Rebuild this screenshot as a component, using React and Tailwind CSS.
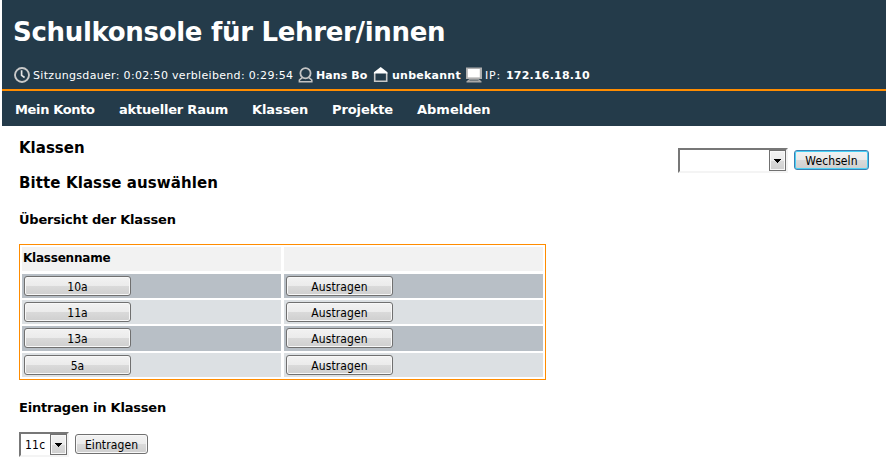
import React from "react";

const ROWS = [
  { name: "10a", row: "h-[24px] mb-[2px]", tone: "bg-[#b8bfc6]" },
  { name: "11a", row: "h-[24px] mb-[2px]", tone: "bg-[#dce0e3]" },
  { name: "13a", row: "h-[25px] mb-[2px]", tone: "bg-[#b8bfc6]" },
  { name: "5a", row: "h-[24px]", tone: "bg-[#dce0e3]" },
];

const NAV = [
  { label: "Mein Konto", width: "w-[104px] tracking-[-0.35px]" },
  { label: "aktueller Raum", width: "w-[133px] tracking-[-0.2px]" },
  { label: "Klassen", width: "w-[80px] tracking-[-0.1px]" },
  { label: "Projekte", width: "w-[85px] tracking-[-0.1px]" },
  { label: "Abmelden", width: "w-[90px]" },
];

function Button({ children, className, focused = false }) {
  const edge = focused
    ? "border-[#3c7fb1] shadow-[inset_0_0_0_1px_#48d0f5]"
    : "border-[#707070] shadow-[inset_0_0_0_1px_#f8f8f8]";
  return (
    <button
      className={`flex h-[20px] shrink-0 items-center justify-center whitespace-nowrap rounded-[3px] border bg-[linear-gradient(#f2f2f2_0%,#ebebeb_50%,#dadada_51%,#cfcfcf_100%)] pt-[2px] font-['DejaVu_Sans_Condensed','DejaVu_Sans',sans-serif] text-[12px] font-normal leading-[18px] tracking-[0.1px] text-black [font-stretch:condensed] ${edge} ${className}`}
    >
      {children}
    </button>
  );
}

function Select({ value, className }) {
  return (
    <div
      className={`flex h-[25px] shrink-0 border-2 border-b-[#f4f4f4] border-l-[#777] border-r-[#f4f4f4] border-t-[#777] bg-white ${className}`}
    >
      <span className="flex-1 pl-[4px] pt-px font-['DejaVu_Sans_Condensed','DejaVu_Sans',sans-serif] text-[12px] leading-[21px] tracking-[0.2px] [font-stretch:condensed]">
        {value}
      </span>
      <span className="flex h-[21px] w-[17px] items-center justify-center border border-[#707070] bg-[linear-gradient(#f2f2f2_0%,#ebebeb_50%,#dadada_51%,#cfcfcf_100%)] shadow-[inset_0_0_0_1px_#f8f8f8]">
        <svg width="7" height="4" viewBox="0 0 7 4" shapeRendering="crispEdges">
          <path d="M0 0h7v1H6v1H5v1H4v1H3V3H2V2H1V1H0z" />
        </svg>
      </span>
    </div>
  );
}

function ClockIcon() {
  return (
    <svg className="shrink-0" width="16" height="16" viewBox="0 0 16 16" fill="none">
      <circle cx="8" cy="8" r="7" stroke="#c9c9c9" strokeWidth="1.9" />
      <path d="M7.6 3.2v5.2l3 2.1" stroke="#e4e4e4" strokeWidth="1.7" />
    </svg>
  );
}

function UserIcon() {
  return (
    <svg className="shrink-0" width="16" height="16" viewBox="0 0 16 16" fill="none" stroke="#c4c4c4">
      <circle cx="8.5" cy="6.2" r="5.1" strokeWidth="1.8" />
      <path d="M5.2 10.6 2.4 13v1.7h12.4V13L12 10.6" strokeWidth="1.6" />
    </svg>
  );
}

function HouseIcon() {
  return (
    <svg className="shrink-0" width="16" height="16" viewBox="0 0 16 16">
      <path d="M2.7 6v8.3h12V6" fill="none" stroke="#c8c8c8" strokeWidth="1.6" />
      <path d="M8.7 0 1.9 5.2v1.2h13.6V5.2z" fill="#fff" />
    </svg>
  );
}

function MonitorIcon() {
  return (
    <svg className="shrink-0" width="16" height="16" viewBox="0 0 16 16">
      <path d="M0 .5h16V12H0z" fill="#b0b0b0" />
      <path d="M1.8 2h12v8.4h-12z" fill="#fff" />
      <path d="M3.5 12h9l3 2.2v1.3H.5v-1.3z" fill="#a9a9a9" />
      <path d="M3.5 13.2h9" stroke="#4e5c65" strokeWidth=".9" />
    </svg>
  );
}

export default function App() {
  return (
    <div className="h-[464px] w-[886px] overflow-hidden bg-white pl-[2px] font-['DejaVu_Sans',Verdana,sans-serif] text-black">
      <header className="h-[126px] bg-[#243b4a] text-white">
        <div className="h-[91px] border-b-2 border-[#ff8c00]">
          <h1 className="h-[66px] whitespace-nowrap pl-[11px] pt-[16px] text-[26px] font-bold leading-[32px] tracking-[-0.31px]">
            Schulkonsole für Lehrer/innen
          </h1>
          <div className="flex h-[17px] items-center whitespace-nowrap pl-[12px] text-[11px] leading-[17px]">
            <ClockIcon />
            <span className="ml-[3px] w-[264px] pt-[2px] tracking-[0.32px]">Sitzungsdauer: 0:02:50 verbleibend: 0:29:54</span>
            <UserIcon />
            <b className="ml-[3px] w-[56px] pt-[2px] tracking-[0.1px]">Hans Bo</b>
            <HouseIcon />
            <b className="ml-[4px] w-[73px] pt-[2px] tracking-[0.25px]">unbekannt</b>
            <span className="w-px" />
            <MonitorIcon />
            <span className="ml-[3px] w-[21px] pt-[2px] tracking-[0.8px]">IP:</span>
            <b className="pt-[2px] tracking-[0.2px]">172.16.18.10</b>
          </div>
        </div>
        <nav className="flex whitespace-nowrap pl-[13px] pt-[10px] text-[13px] font-bold leading-[17px]">
          {NAV.map((n) => (
            <a key={n.label} className={n.width}>{n.label}</a>
          ))}
        </nav>
      </header>

      <main className="flex justify-between pl-[17px] pr-[17px]">
        <div>
          <h2 className="pt-[12px] text-[15px] font-bold leading-[20px]">Klassen</h2>
          <h2 className="mt-[15px] text-[15px] font-bold leading-[20px] tracking-[0.1px]">Bitte Klasse auswählen</h2>
          <h3 className="mt-[18px] text-[13px] font-bold leading-[18px] tracking-[-0.2px]">Übersicht der Klassen</h3>

          <div className="mt-[15px] h-[136px] w-[527px] bg-[#ff8c00] p-px">
            <div className="h-[134px] bg-white p-[2px]">
              <div className="mb-[3px] flex h-[24px] gap-[3px] text-[12px] font-bold leading-[23px] tracking-[-0.22px]">
                <div className="w-[259px] bg-[#f2f2f2] pl-px">Klassenname</div>
                <div className="w-[259px] bg-[#f2f2f2]" />
              </div>
              {ROWS.map((r) => (
                <div key={r.name} className={`flex gap-[3px] ${r.row}`}>
                  <div className={`w-[259px] pl-[2px] pt-[2px] ${r.tone}`}>
                    <Button className="w-[107px]">{r.name}</Button>
                  </div>
                  <div className={`w-[259px] pl-[2px] pt-[2px] ${r.tone}`}>
                    <Button className="w-[107px]">Austragen</Button>
                  </div>
                </div>
              ))}
            </div>
          </div>

          <h3 className="mt-[19px] text-[13px] font-bold leading-[18px] tracking-[-0.2px]">Eintragen in Klassen</h3>
          <div className="mt-[15px] flex items-start gap-[6px]">
            <Select value="11c" className="w-[50px]" />
            <Button className="mt-[2px] w-[73px]">Eintragen</Button>
          </div>
        </div>

        <div className="flex items-start gap-[6px] pt-[22px]">
          <Select value="" className="w-[110px]" />
          <Button focused className="mt-[2px] w-[75px]">Wechseln</Button>
        </div>
      </main>
    </div>
  );
}
